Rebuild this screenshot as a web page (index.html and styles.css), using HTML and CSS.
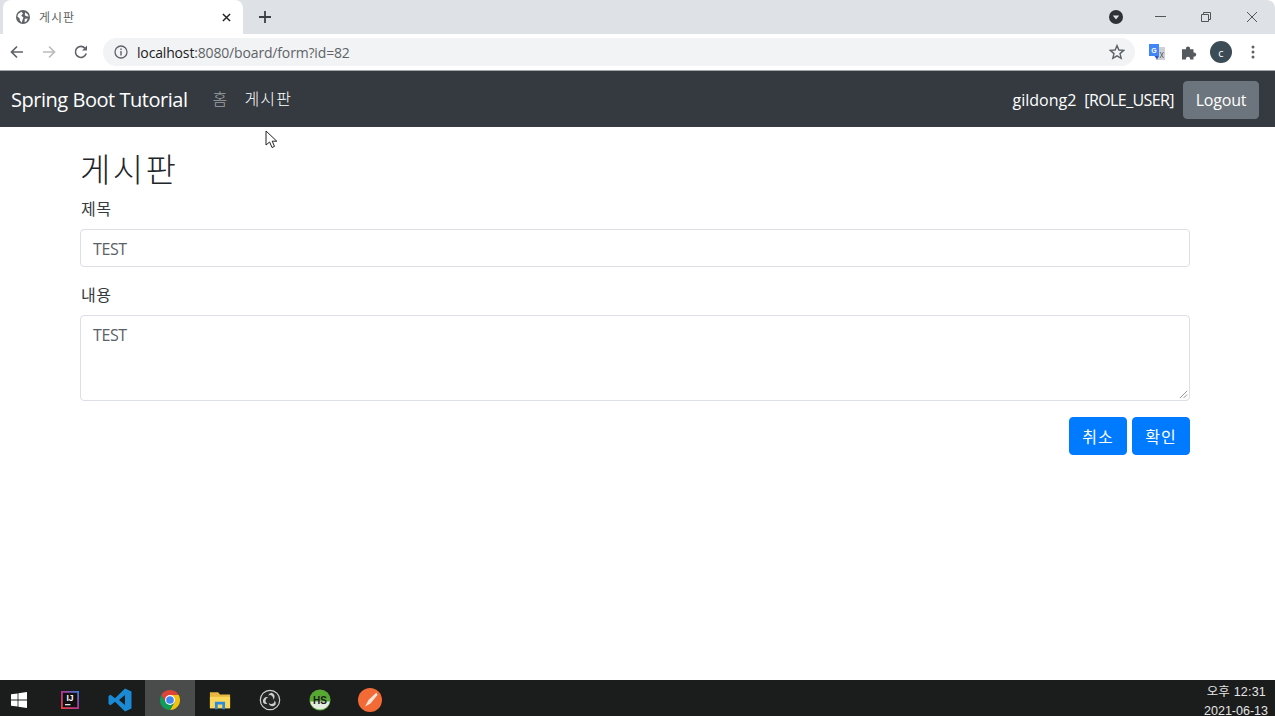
FILE: index.html
```html
<!DOCTYPE html>
<html lang="ko">
<head>
<meta charset="utf-8">
<title>게시판</title>
<link rel="stylesheet" href="styles.css">
</head>
<body>
<div class="screen">
  <header class="chrome">
    <div class="tabstrip">
      <div class="tab">
        <svg class="favicon" viewBox="0 0 16 16"><circle cx="8" cy="8" r="8" fill="#5f6368"/><path d="M2.5 4.5 6 2 8 4 6 6.5 8.5 8.5 7.5 11 6.5 14.5 4.5 12 4 9.5 1.5 7.5ZM10.5 2.5 13.5 5 14.5 7.5 12 7 10 6ZM10 10 13.5 9.8 12 12.8 9.8 14Z" fill="#fff"/></svg>
        <span class="tab-title">게시판</span>
        <svg class="tab-close" viewBox="0 0 10 10"><path d="M1 1 9 9M9 1 1 9" stroke="#202124" stroke-width="1.6"/></svg>
      </div>
      <svg class="new-tab" viewBox="0 0 12 12"><path d="M6 0V12M0 6H12" stroke="#3c4043" stroke-width="1.8"/></svg>
      <div class="strip-right">
        <svg class="tab-search" viewBox="0 0 14 14"><circle cx="7" cy="7" r="7" fill="#303336"/><path d="M3.8 5.4H10.2L7 9.4Z" fill="#dee1e6"/></svg>
        <div class="window-controls">
          <svg viewBox="0 0 12 12"><path d="M1 5.5H12" stroke="#555" stroke-width="1"/></svg>
          <svg viewBox="0 0 12 12"><path d="M1.5 3.5H8.5V10.5H1.5ZM3.5 3.5V1.5H10.5V8.5H8.5" fill="none" stroke="#555" stroke-width="1"/></svg>
          <svg viewBox="0 0 12 12"><path d="M1 1 11 11M11 1 1 11" stroke="#555" stroke-width="1"/></svg>
        </div>
      </div>
    </div>
    <div class="toolbar">
      <svg class="tool-icon" viewBox="0 0 16 16"><path d="M14 8H2.5M8 2.5 2.5 8 8 13.5" fill="none" stroke="#5f6368" stroke-width="1.7"/></svg>
      <svg class="tool-icon" viewBox="0 0 16 16"><path d="M2 8H13.5M8 2.5 13.5 8 8 13.5" fill="none" stroke="#babcbe" stroke-width="1.7"/></svg>
      <svg class="tool-icon reload" viewBox="0 0 16 16"><path d="M13.2 9.5A5.5 5.5 0 1 1 12 4.2" fill="none" stroke="#5f6368" stroke-width="1.6"/><path d="M14 1.5V6.5H9Z" fill="#5f6368"/></svg>
      <div class="omnibox">
        <svg class="info" viewBox="0 0 14 14"><circle cx="7" cy="7" r="6" fill="none" stroke="#5f6368" stroke-width="1.3"/><path d="M7 6V10.4M7 3.6V5" stroke="#5f6368" stroke-width="1.4"/></svg>
        <span class="url"><span class="url-host">localhost</span>:8080/board/form?id=82</span>
        <svg class="star" viewBox="0 0 16 16"><path d="M8 1.6 9.9 6 14.7 6.4 11 9.6 12.2 14.3 8 11.8 3.8 14.3 5 9.6 1.3 6.4 6.1 6Z" fill="none" stroke="#5f6368" stroke-width="1.4"/></svg>
      </div>
      <div class="extensions">
        <svg class="ext wide" viewBox="0 0 18 18"><path d="M8 4H17V17H8Z" fill="#cfd1d4"/><path d="M1 1H11V13H1Z" fill="#4285f4"/><text class="gt" x="6" y="10" text-anchor="middle">G</text><path d="M6.5 13 9 16.5 11 13Z" fill="#2a56c6"/><path d="M12 9 15.5 15M15.5 9 12 15" stroke="#6b6f73" stroke-width="1"/></svg>
        <svg class="ext" viewBox="0 0 16 16"><path d="M1 5.2H5A2.1 2.1 0 1 1 9 5.2H12.5V8.6A2.1 2.1 0 1 1 12.5 12.6V15.5H9A2.1 2.1 0 1 0 5 15.5H1Z" fill="#555a5e"/></svg>
        <span class="avatar">c</span>
        <svg class="ext" viewBox="0 0 16 16"><circle cx="8" cy="3" r="1.5" fill="#5f6368"/><circle cx="8" cy="8" r="1.5" fill="#5f6368"/><circle cx="8" cy="13" r="1.5" fill="#5f6368"/></svg>
      </div>
    </div>
  </header>

  <nav class="navbar">
    <a class="brand">Spring Boot Tutorial</a>
    <div class="nav-links">
      <a class="nav-link">홈</a>
      <a class="nav-link active">게시판</a>
    </div>
    <div class="nav-user">
      <span class="user-name">gildong2</span>
      <span class="user-role">[ROLE_USER]</span>
      <button class="btn-logout">Logout</button>
    </div>
  </nav>

  <main class="container">
    <h2 class="page-title">게시판</h2>
    <form class="form">
      <div class="form-group">
        <label class="field-label">제목</label>
        <div class="control">TEST</div>
      </div>
      <div class="form-group">
        <label class="field-label">내용</label>
        <div class="control area">TEST
          <svg class="grip" viewBox="0 0 10 10"><path d="M1 9 9 1M5 9 9 5" stroke="#8a8a8a" stroke-width="1"/></svg>
        </div>
      </div>
      <div class="actions">
        <button type="button" class="btn-primary">취소</button>
        <button type="button" class="btn-primary">확인</button>
      </div>
    </form>
  </main>

  <footer class="taskbar">
    <div class="task start"><svg class="task-icon win" viewBox="0 0 16 16"><path d="M0 2.3 6.6 1.4V7.6H0ZM7.4 1.3 16 0V7.6H7.4ZM0 8.4H6.6V14.6L0 13.7ZM7.4 8.4H16V16L7.4 14.7Z" fill="#fff"/></svg></div>
    <div class="task"><svg class="task-icon ij" viewBox="0 0 20 20"><defs><linearGradient id="ij" x1="0" y1="1" x2="1" y2="0"><stop offset="0" stop-color="#f0443e"/><stop offset="0.5" stop-color="#b5348f"/><stop offset="1" stop-color="#2f7fe0"/></linearGradient></defs><rect width="20" height="20" fill="url(#ij)"/><rect x="2" y="2" width="16" height="16" fill="#111"/><text class="ij-text" x="10" y="11.5" text-anchor="middle">IJ</text><path d="M4.5 15.2H10.5" stroke="#fff" stroke-width="1.3"/></svg></div>
    <div class="task"><svg class="task-icon large" viewBox="0 0 24 24"><path d="M17 .5 23.5 3.5V20.5L17 23.5 7 13.8 2.5 17.3 .5 16V8L2.5 6.7 7 10.2ZM17 7 11 12 17 17Z" fill="#1a8ad4"/></svg></div>
    <div class="task running"><svg class="task-icon" viewBox="0 0 24 24"><path d="M2.5 6.5A11 11 0 0 1 21.5 6.5H12L7.2 14.8Z" fill="#db4437"/><path d="M21.5 6.5A11 11 0 0 1 12 23L16.8 14.8 12 6.5Z" fill="#f4c20d"/><path d="M12 23A11 11 0 0 1 2.5 6.5L7.2 14.8H16.8Z" fill="#0f9d58"/><circle cx="12" cy="12" r="5.4" fill="#fff"/><circle cx="12" cy="12" r="4.2" fill="#4285f4"/></svg></div>
    <div class="task"><svg class="task-icon" viewBox="0 0 24 24"><path d="M1 3.5H10L12 6H23V21H1Z" fill="#e8b73f"/><path d="M1 8.5H23V21H1Z" fill="#fbd75b"/><path d="M6.5 14H17.5V22H14.5V17H9.5V22H6.5Z" fill="#2d8bdc"/></svg></div>
    <div class="task"><svg class="task-icon" viewBox="0 0 24 24"><circle cx="12" cy="12" r="10.6" fill="#262828" stroke="#cfcfcf" stroke-width="1.3"/><g fill="#cfcfcf"><path d="M13.5 4.2A4.2 4.2 0 0 1 15.2 11.8 3.6 3.6 0 0 0 10 7.3 4.2 4.2 0 0 1 13.5 4.2Z"/><path d="M13.5 4.2A4.2 4.2 0 0 1 15.2 11.8 3.6 3.6 0 0 0 10 7.3 4.2 4.2 0 0 1 13.5 4.2Z" transform="rotate(120 12 12)"/><path d="M13.5 4.2A4.2 4.2 0 0 1 15.2 11.8 3.6 3.6 0 0 0 10 7.3 4.2 4.2 0 0 1 13.5 4.2Z" transform="rotate(240 12 12)"/></g></svg></div>
    <div class="task"><svg class="task-icon" viewBox="0 0 24 24"><circle cx="12" cy="12" r="11.5" fill="#57a832"/><path d="M1.2 13.5H22.8A11 11 0 0 1 1.2 13.5Z" fill="#e4ebe0"/><text class="hs" x="12" y="16.5" text-anchor="middle">HS</text></svg></div>
    <div class="task"><svg class="task-icon large" viewBox="0 0 24 24"><circle cx="12" cy="12" r="12" fill="#f26b36"/><path d="M18.5 4.5 10.5 12 7 18.5 12.5 15.5 19.5 7Z" fill="#fde3d5"/></svg></div>
    <div class="clock">
      <span class="clock-time">오후 12:31</span>
      <span>2021-06-13</span>
    </div>
  </footer>

  <svg class="cursor" viewBox="0 0 13 19"><path d="M1 1V15L4.6 12 7 17.5 9.5 16.4 7.2 11.2H11.8Z" fill="#fff" stroke="#222" stroke-width="1"/></svg>
</div>
</body>
</html>
```

FILE: styles.css
```css
* { box-sizing: border-box; }
html, body { margin: 0; padding: 0; }
body {
  font-family: "Open Sans", "Noto Sans CJK KR", sans-serif;
  color: #212529;
  background: #fff;
  overflow: hidden;
}
.screen {
  position: relative;
  width: 1275px;
  height: 716px;
  display: flex;
  flex-direction: column;
}
.chrome { height: 71px; flex: none; background: #fff; border-bottom: 1px solid #a3a6a9; }
.tabstrip {
  height: 34px;
  background: #dee1e6;
  display: flex;
  align-items: center;
  padding-left: 3px;
  border-top-right-radius: 8px;
}
.tab {
  width: 240px;
  height: 34px;
  background: #fff;
  border-radius: 8px 8px 0 0;
  display: flex;
  align-items: center;
  padding: 0 12px 0 13px;
}
.favicon { width: 14px; height: 14px; flex: none; }
.tab-title { font-size: 12px; letter-spacing: 1px; color: #5f6368; margin-left: 9px; flex: 1; }
.tab-close { width: 9px; height: 9px; }
.new-tab { width: 12px; height: 12px; margin-left: 16px; }
.strip-right { margin-left: auto; display: flex; align-items: center; }
.tab-search { width: 14px; height: 14px; margin-right: 31px; }
.window-controls { display: flex; gap: 34px; padding-right: 17px; }
.window-controls svg { width: 12px; height: 12px; display: block; }
.toolbar { height: 36px; display: flex; align-items: center; padding: 0 0 0 9px; }
.tool-icon { width: 16px; height: 16px; margin-right: 16px; flex: none; }
.tool-icon.reload { margin-right: 14px; }
.omnibox {
  width: 1032px;
  height: 28px;
  background: #f1f3f4;
  border-radius: 14px;
  display: flex;
  align-items: center;
  padding: 0 10px 0 11px;
}
.info { width: 14px; height: 14px; flex: none; }
.url { font-size: 14px; letter-spacing: -.16px; color: #5f6368; margin-left: 9px; flex: 1; }
.url-host { color: #202124; }
.star { width: 16px; height: 16px; }
.extensions { display: flex; align-items: center; gap: 16px; margin-left: 13px; }
.ext { width: 16px; height: 16px; display: block; }
.ext.wide { width: 18px; height: 18px; margin-right: -1px; }
.gt { font-family: "Liberation Sans", sans-serif; font-size: 7px; font-weight: 700; fill: #fff; }
.avatar {
  width: 22px;
  height: 22px;
  margin: 0 -3px;
  border-radius: 50%;
  background: #3c4c57;
  color: #fff;
  font-size: 11px;
  display: flex;
  align-items: center;
  justify-content: center;
}
.navbar {
  height: 56px;
  flex: none;
  background: #343a40;
  display: flex;
  align-items: center;
  padding: 2px 16px 0 11px;
  color: #fff;
}
.brand { font-size: 20px; letter-spacing: -.47px; margin-right: 17px; margin-top: -2px; }
.nav-links { display: flex; }
.nav-link { font-size: 16px; font-weight: 300; padding: 0 8px; letter-spacing: 1.2px; color: rgba(255,255,255,.55); margin-top: -5px; }
.nav-link.active { color: #fff; }
.nav-user { margin-left: auto; display: flex; align-items: center; gap: 8px; font-size: 16px; }
.user-role { letter-spacing: -.6px; margin-right: 1px; }
.btn-logout {
  font: inherit;
  letter-spacing: -.2px;
  height: 38px;
  width: 76px;
  color: #fff;
  background: #6c757d;
  border: 1px solid #6c757d;
  border-radius: 4px;
}
.container { flex: 1; padding: 0 85px 0 80px; }
.page-title { font-size: 33px; font-weight: 300; letter-spacing: 2.4px; line-height: 38px; margin: 24px 0 8px; height: 38px; }
.form-group { margin-bottom: 16px; }
.field-label { display: block; font-size: 16px; letter-spacing: .6px; line-height: 24px; margin-bottom: 8px; color: #333a40; padding-left: 1px; }
.control {
  position: relative;
  height: 38px;
  border: 1px solid #dcdfe3;
  border-radius: 4px;
  padding: 7px 12px 5px;
  font-size: 16px;
  letter-spacing: -.4px;
  line-height: 24px;
  color: #5a6168;
}
.control.area { height: 86px; }
.grip { position: absolute; right: 1px; bottom: 1px; width: 9px; height: 9px; }
.actions { display: flex; justify-content: flex-end; gap: 5px; }
.btn-primary {
  font: inherit;
  font-size: 16px;
  letter-spacing: 1px;
  width: 58px;
  height: 38px;
  color: #fff;
  background: #007bff;
  border: 1px solid #007bff;
  border-radius: 4px;
}
.taskbar {
  height: 36px;
  flex: none;
  background: #1b1d1d;
  display: flex;
  align-items: stretch;
  position: relative;
}
.task { width: 50px; display: flex; align-items: center; justify-content: center; padding-top: 3px; }
.task.start { width: 38px; }
.task.start + .task { margin-left: 7px; }
.task.running { background: #4a4c4c; }
.task-icon { width: 22px; height: 22px; display: block; }
.task-icon.win { width: 16px; height: 16px; }
.task-icon.ij { width: 18px; height: 18px; }
.task-icon.large { width: 24px; height: 24px; }
.ij-text { font-family: "Liberation Sans", sans-serif; font-size: 9.5px; font-weight: 700; fill: #fff; }
.hs { font-family: "Liberation Sans", sans-serif; font-size: 11px; font-weight: 700; fill: #1c1c1c; }
.clock {
  margin-left: auto;
  padding: 7px 7px 0 0;
  display: flex;
  flex-direction: column;
  align-items: flex-end;
  justify-content: center;
  color: #e6e6e6;
  font-family: "Liberation Sans", "Noto Sans CJK KR", sans-serif;
  font-size: 12.5px;
  line-height: 19px;
}
.clock-time { padding-right: 2px; letter-spacing: .2px; }
.cursor { position: absolute; left: 265px; top: 130px; width: 13px; height: 19px; }
```
